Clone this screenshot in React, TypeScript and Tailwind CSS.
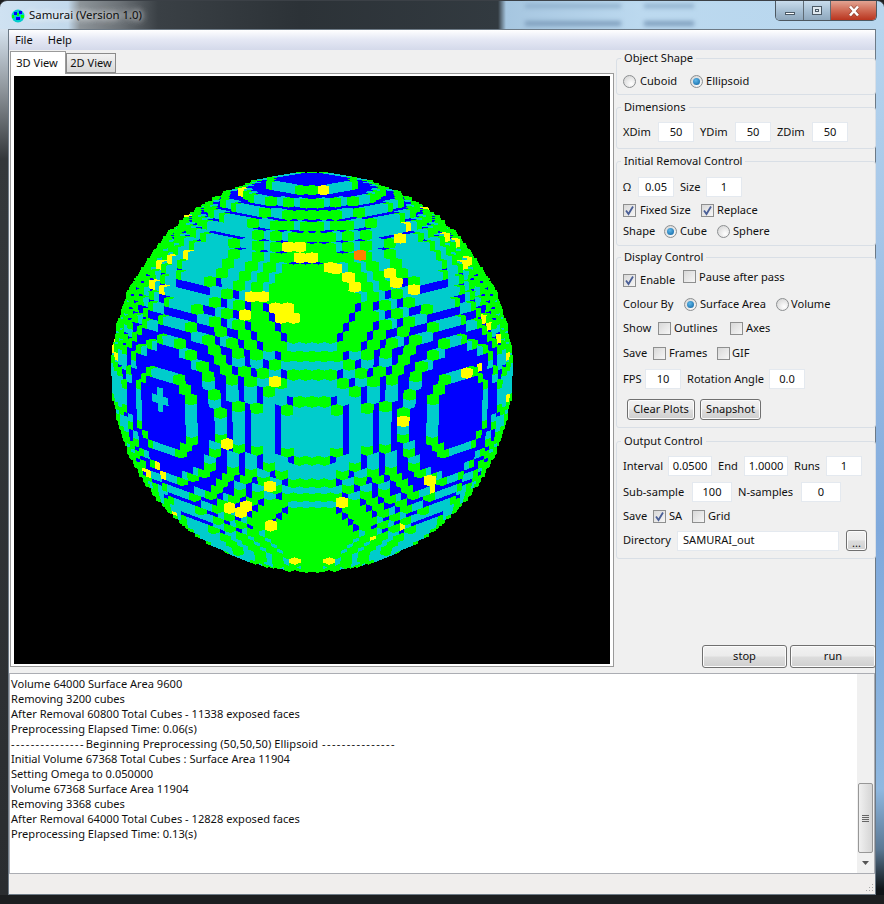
import { useMemo, type ReactNode } from 'react';

// voxel sphere, same as the app's GL view: colour by exposed faces
const R2 = 627;
const OFF = 0.5; // 50 cubes across, so the centre falls on a cube corner
const AX = [-0.707, 0.194, 0.68];
const AY = [0.707, 0.194, 0.68];
const AZ = [0, -0.962, 0.274];
const CX = 312;
const CY = 371;
const CAM = 225;
const FOCAL = 1750;

const YELLOW: [number, number][] = [
  [243, 188], [203, 202], [192, 215], [283, 242], [292, 242], [300, 242], [302, 253], [308, 253],
  [160, 265], [168, 260], [186, 255], [153, 282], [163, 290], [132, 282], [115, 340], [114, 350],
  [118, 358], [255, 300], [250, 310], [267, 292], [273, 302], [279, 312], [291, 303], [297, 313],
  [323, 192], [422, 207], [410, 230], [402, 233], [448, 233], [453, 237], [332, 263], [338, 273],
  [349, 273], [355, 282], [389, 268], [396, 277], [418, 293], [468, 257], [465, 262], [485, 317],
  [490, 323], [500, 335], [506, 357], [470, 370], [477, 365], [273, 384], [227, 444], [159, 463],
  [163, 472], [145, 468], [148, 473], [268, 485], [228, 507], [240, 513], [245, 509], [268, 525],
  [173, 512], [290, 560], [509, 397], [403, 420], [435, 480], [434, 491], [343, 506], [405, 526],
  [371, 539], [331, 560],
];
const CROSS: [number, number][] = [[160, 398], [154, 397], [166, 399], [160, 390], [160, 406]];
const ORANGE: [number, number] = [360, 251];

const inside = (x: number, y: number, z: number) =>
  (x - OFF) * (x - OFF) + (y - OFF) * (y - OFF) + (z - OFF) * (z - OFF) <= R2;
const dot = (a: number[], x: number, y: number, z: number) => a[0] * x + a[1] * y + a[2] * z;

function castRay(sx: number, sy: number): [number, number, number] | null {
  const dvx = sx - CX;
  const dvy = sy - CY;
  const dvz = -FOCAL;
  const ox = dot(AX, 0, 0, CAM);
  const oy = dot(AY, 0, 0, CAM);
  const oz = dot(AZ, 0, 0, CAM);
  let dx = dot(AX, dvx, dvy, dvz);
  let dy = dot(AY, dvx, dvy, dvz);
  let dz = dot(AZ, dvx, dvy, dvz);
  const len = Math.hypot(dx, dy, dz);
  dx /= len;
  dy /= len;
  dz /= len;
  const b = ox * dx + oy * dy + oz * dz;
  const c = ox * ox + oy * oy + oz * oz - 29 * 29;
  const disc = b * b - c;
  if (disc < 0) return null;
  const t0 = -b - Math.sqrt(disc);
  const px = ox + dx * t0 + OFF;
  const py = oy + dy * t0 + OFF;
  const pz = oz + dz * t0 + OFF;
  let ix = Math.round(px);
  let iy = Math.round(py);
  let iz = Math.round(pz);
  const sgx = dx > 0 ? 1 : -1;
  const sgy = dy > 0 ? 1 : -1;
  const sgz = dz > 0 ? 1 : -1;
  const tdx = Math.abs(1 / dx);
  const tdy = Math.abs(1 / dy);
  const tdz = Math.abs(1 / dz);
  let tx = dx === 0 ? 1e9 : (ix + sgx * 0.5 - px) / dx;
  let ty = dy === 0 ? 1e9 : (iy + sgy * 0.5 - py) / dy;
  let tz = dz === 0 ? 1e9 : (iz + sgz * 0.5 - pz) / dz;
  for (let i = 0; i < 120; i++) {
    if (inside(ix, iy, iz)) return [ix, iy, iz];
    if (tx < ty && tx < tz) {
      ix += sgx;
      tx += tdx;
    } else if (ty < tz) {
      iy += sgy;
      ty += tdy;
    } else {
      iz += sgz;
      tz += tdz;
    }
  }
  return null;
}

// outline of a whole cube on screen, so marked cubes show as full hexagons
function cubeOutline([x, y, z]: [number, number, number]) {
  const pts: [number, number][] = [];
  for (const a of [-0.5, 0.5]) {
    for (const b of [-0.5, 0.5]) {
      for (const c of [-0.5, 0.5]) {
        const [qx, qy, qz] = [x + a - OFF, y + b - OFF, z + c - OFF];
        const vx = AX[0] * qx + AY[0] * qy + AZ[0] * qz;
        const vy = AX[1] * qx + AY[1] * qy + AZ[1] * qz;
        const vz = AX[2] * qx + AY[2] * qy + AZ[2] * qz;
        const k = FOCAL / (CAM - vz);
        pts.push([CX + vx * k, CY + vy * k]);
      }
    }
  }
  pts.sort((p, q) => p[0] - q[0] || p[1] - q[1]);
  const half = (list: [number, number][]) => {
    const out: [number, number][] = [];
    for (const p of list) {
      while (out.length > 1) {
        const [a, b] = [out[out.length - 2], out[out.length - 1]];
        if ((b[0] - a[0]) * (p[1] - a[1]) - (b[1] - a[1]) * (p[0] - a[0]) > 0) break;
        out.pop();
      }
      out.push(p);
    }
    out.pop();
    return out;
  };
  const hull = [...half(pts), ...half([...pts].reverse())];
  return hull.map((p) => `${p[0].toFixed(1)},${p[1].toFixed(1)}`).join(' ');
}

function buildSphere() {
  const paths: Record<string, string[]> = { b: [], c: [], g: [], y: [], o: [] };
  const marks = new Map<string, string>();
  const hexes: string[] = [];
  for (const [x, y] of CROSS) {
    const hit = castRay(x, y);
    if (hit) marks.set(hit.join(), 'c');
  }
  for (const [x, y] of YELLOW) {
    const hit = castRay(x, y);
    if (!hit) continue;
    marks.set(hit.join(), 'y');
    if (Math.hypot(x - CX, y - CY) < 165) hexes.push(cubeOutline(hit));
  }
  const oh = castRay(ORANGE[0], ORANGE[1]);
  if (oh) marks.set(oh.join(), 'o');
  const orange = oh ? cubeOutline(oh) : '';
  const cache = new Map<string, string>();
  const colourOf = (h: [number, number, number]) => {
    const key = h.join();
    const m = marks.get(key);
    if (m) return m;
    let col = cache.get(key);
    if (col) return col;
    const [x, y, z] = h;
    const n =
      (inside(x + 1, y, z) ? 0 : 1) + (inside(x - 1, y, z) ? 0 : 1) + (inside(x, y + 1, z) ? 0 : 1) +
      (inside(x, y - 1, z) ? 0 : 1) + (inside(x, y, z + 1) ? 0 : 1) + (inside(x, y, z - 1) ? 0 : 1);
    col = n <= 1 ? 'b' : n === 2 ? 'c' : 'g';
    cache.set(key, col);
    return col;
  };
  for (let y = 150; y < 592; y++) {
    let start = 0;
    let cur = '';
    for (let x = 90; x <= 534; x++) {
      const hit = x < 534 ? castRay(x + 0.5, y + 0.5) : null;
      const col = hit ? colourOf(hit) : '';
      if (col !== cur) {
        if (cur) paths[cur].push(`M${start} ${y}h${x - start}v1h${start - x}z`);
        start = x;
        cur = col;
      }
    }
  }
  return { paths, hexes, orange };
}

function Sphere() {
  const { paths, hexes, orange } = useMemo(buildSphere, []);
  return (
    <svg width={596} height={588} viewBox="14 75 596 588" className="block" shapeRendering="crispEdges">
      <path d={paths.b.join('')} fill="#0000ff" />
      <path d={paths.c.join('')} fill="#00cccc" />
      <path d={paths.g.join('')} fill="#00ff00" />
      <path d={paths.y.join('')} fill="#ffff00" />
      {hexes.map((pts) => (
        <polygon key={pts} points={pts} fill="#ffff00" />
      ))}
      <path d={paths.o.join('')} fill="#ff7f00" />
      {orange && <polygon points={orange} fill="#ff7f00" />}
    </svg>
  );
}

function Radio({ on }: { on?: boolean }) {
  return (
    <span className="w-[13px] h-[13px] shrink-0 rounded-full border border-[#8c8f91] bg-[radial-gradient(circle_at_65%_70%,#ffffff,#cfcfcf)] flex items-center justify-center">
      {on && <span className="w-[7px] h-[7px] rounded-full bg-[radial-gradient(circle_at_40%_35%,#5fb8ea,#0b5f9e)]" />}
    </span>
  );
}

function Check({ on }: { on?: boolean }) {
  return (
    <span className="w-[13px] h-[13px] shrink-0 border border-[#8e8f8f] bg-[linear-gradient(135deg,#d8d8d8,#f6f6f6)] flex items-center justify-center">
      {on && (
        <svg width="11" height="11" viewBox="0 0 11 11">
          <path d="M2 5.5 L4.5 9 L9 1.5" fill="none" stroke="#4a5f97" strokeWidth="1.8" />
        </svg>
      )}
    </span>
  );
}

function Field({ value, className }: { value: string; className: string }) {
  return (
    <span className={`h-[20px] shrink-0 bg-white border border-[#e4e9ef] flex items-center justify-center ${className}`}>
      {value}
    </span>
  );
}

function Group({ title, className, children }: { title: string; className: string; children: ReactNode }) {
  return (
    <div className={`border border-[#d9dfe6] rounded-[3px] ${className}`}>
      <div className="-mt-[9px] ml-[4px] px-[3px] w-fit h-[16px] leading-[16px] bg-[#f0f0f0]">{title}</div>
      {children}
    </div>
  );
}

function PushButton({ children, className }: { children: ReactNode; className: string }) {
  return (
    <span className={`flex items-center justify-center border border-[#707070] rounded-[3px] bg-[linear-gradient(#f2f2f2_0%,#ebebeb_48%,#dddddd_52%,#cfcfcf_100%)] shadow-[inset_0_0_0_1px_#fcfcfc] ${className}`}>
      {children}
    </span>
  );
}

const LOG_TOP = [
  'Volume 64000 Surface Area 9600',
  'Removing 3200 cubes',
  'After Removal 60800 Total Cubes - 11338 exposed faces',
  'Preprocessing Elapsed Time: 0.06(s)',
];
const LOG_BOTTOM = [
  'Initial Volume 67368 Total Cubes : Surface Area 11904',
  'Setting Omega to 0.050000',
  'Volume 67368 Surface Area 11904',
  'Removing 3368 cubes',
  'After Removal 64000 Total Cubes - 12828 exposed faces',
  'Preprocessing Elapsed Time: 0.13(s)',
];

export default function App() {
  return (
    <div className="w-[884px] h-[904px] overflow-hidden flex flex-col text-[11.1px] whitespace-nowrap text-[#101010] font-['Noto_Sans',sans-serif] bg-[#1c1e20]">
      {/* title bar */}
      <div className="relative h-[29px] shrink-0 flex items-start border-t border-[#3b4046] rounded-t-[7px] bg-[linear-gradient(90deg,#cfe2f2_0px,#c3d9ec_68px,#8d9499_80px,#6c7277_120px,#3a4045_158px,#2c3237_300px,#323a40_498px,#a6c6e0_506px,#bcd9ef_640px,#b7d6ee_884px)]">
        <span className="absolute left-[525px] top-[3px] w-[96px] h-[4px] bg-[#8eaecb] blur-[2px]" />
        <span className="absolute left-[644px] top-[3px] w-[50px] h-[4px] bg-[#8eaecb] blur-[2px]" />
        <span className="absolute left-[525px] top-[20px] w-[96px] h-[5px] bg-[#7f9fbd] blur-[2px]" />
        <span className="absolute left-[644px] top-[20px] w-[50px] h-[5px] bg-[#7f9fbd] blur-[2px]" />
        <svg width="14" height="14" viewBox="0 0 14 14" className="ml-[11px] mt-[8px] shrink-0">
          <circle cx="7" cy="7" r="6.5" fill="#00cccc" />
          <path d="M3 3h3v3H3zM8 2h3v3H8zM5 8h4v3H5z" fill="#0000ff" />
          <path d="M1 6h2v3H1zM6 4h2v3H6zM10 6h3v3h-3z" fill="#00ff00" />
        </svg>
        <span className="ml-[4px] mt-[5px] text-[#0c0c0c] text-[11.4px] [text-shadow:0_0_7px_#ffffff,0_0_7px_#ffffff]">Samurai (Version 1.0)</span>
        <div className="ml-auto mr-[7px] w-[102px] h-[20px] flex rounded-b-[5px] border border-t-0 border-[#4d5861] overflow-hidden">
          <span className="w-[28px] border-r border-[#5f6b75] bg-[linear-gradient(#c9dcec,#a8c0d4_50%,#8fa8bd)] flex items-center justify-center">
            <span className="mt-[6px] w-[10px] h-[3px] bg-white border border-[#4c5a66]" />
          </span>
          <span className="w-[27px] border-r border-[#5f6b75] bg-[linear-gradient(#c9dcec,#a8c0d4_50%,#8fa8bd)] flex items-center justify-center">
            <span className="w-[10px] h-[9px] bg-[#dfe8ef] border border-[#4c5a66] flex items-center justify-center">
              <span className="w-[4px] h-[3px] border border-[#4c5a66]" />
            </span>
          </span>
          <span className="flex-1 bg-[linear-gradient(#e2a493,#cf6a54_50%,#b9351f)] flex items-center justify-center">
            <svg width="14" height="12" viewBox="0 0 14 12">
              <path d="M3 1.5 L11 10.5 M11 1.5 L3 10.5" stroke="#5a2a20" strokeWidth="4" opacity="0.5" />
              <path d="M3 1.5 L11 10.5 M11 1.5 L3 10.5" stroke="#ffffff" strokeWidth="2.6" />
            </svg>
          </span>
        </div>
      </div>

      <div className="h-[866px] shrink-0 flex">
        <div className="w-[8px] shrink-0 bg-[linear-gradient(#d5e2ee_0px,#8f969c_60px,#34383b_130px,#2a2d30_100%)]" />

        <div className="w-[868px] shrink-0 border border-[#6d7a86] bg-[#f0f0f0] flex flex-col">
          {/* menu */}
          <div className="h-[20px] shrink-0 flex items-center gap-[15px] pl-[6px] bg-[linear-gradient(#ffffff,#e6e9f5_45%,#d4d9ea)]">
            <span>File</span>
            <span>Help</span>
          </div>

          <div className="h-[621px] shrink-0 flex">
            {/* tabs + GL view */}
            <div className="w-[604px] shrink-0 flex flex-col ml-[1px] pt-[1px]">
              <div className="h-[22px] shrink-0 flex items-end relative z-10">
                <span className="w-[56px] h-[23px] -mb-[1px] pr-[2px] bg-white border border-b-0 border-[#9a9a9a] flex items-center justify-center">3D View</span>
                <span className="w-[50px] h-[20px] bg-[linear-gradient(#f2f2f2,#d8d8d8)] border border-[#8a8a8a] flex items-center justify-center">2D View</span>
              </div>
              <div className="h-[594px] border border-[#9a9a9a] bg-white pl-[3px] pt-[2px]">
                <div className="w-[596px] h-[588px] bg-black">
                  <Sphere />
                </div>
              </div>
            </div>

            {/* control column */}
            <div className="w-[260px] shrink-0 ml-[2px] flex flex-col pt-[8px]">
              <Group title="Object Shape" className="h-[37px]">
                <div className="flex items-center h-[20px] mt-[5px] pl-[6px]">
                  <Radio /><span className="ml-[4px] w-[50px]">Cuboid</span>
                  <Radio on /><span className="ml-[3px]">Ellipsoid</span>
                </div>
              </Group>
              <Group title="Dimensions" className="h-[42px] mt-[12px]">
                <div className="flex items-center mt-[7px] pl-[6px]">
                  <span className="w-[35px]">XDim</span><Field value="50" className="w-[36px]" />
                  <span className="w-[41px] pl-[6px]">YDim</span><Field value="50" className="w-[36px]" />
                  <span className="w-[41px] pl-[6px]">ZDim</span><Field value="50" className="w-[36px]" />
                </div>
              </Group>
              <Group title="Initial Removal Control" className="h-[85px] mt-[12px]">
                <div className="flex items-center mt-[8px] pl-[6px]">
                  <span className="w-[15px]">Ω</span><Field value="0.05" className="w-[36px]" />
                  <span className="w-[32px] pl-[6px]">Size</span><Field value="1" className="w-[36px]" />
                </div>
                <div className="flex items-center h-[16px] mt-[5px] pl-[6px]">
                  <Check on /><span className="ml-[4px] w-[61px]">Fixed Size</span>
                  <Check on /><span className="ml-[3px]">Replace</span>
                </div>
                <div className="flex items-center h-[16px] mt-[5px] pl-[6px]">
                  <span className="w-[41px]">Shape</span>
                  <Radio on /><span className="ml-[3px] w-[37px]">Cube</span>
                  <Radio /><span className="ml-[3px]">Sphere</span>
                </div>
              </Group>
              <Group title="Display Control" className="h-[171px] mt-[11px]">
                <div className="flex items-center h-[18px] mt-[6px] pl-[6px]">
                  <Check on /><span className="ml-[4px] w-[43px]">Enable</span>
                  <span className="-mt-[6px] flex items-center"><Check /><span className="ml-[3px]">Pause after pass</span></span>
                </div>
                <div className="flex items-center h-[18px] mt-[6px] pl-[6px]">
                  <span className="w-[61px]">Colour By</span>
                  <Radio on /><span className="ml-[3px] w-[76px]">Surface Area</span>
                  <Radio /><span className="ml-[2px]">Volume</span>
                </div>
                <div className="flex items-center h-[18px] mt-[6px] pl-[6px]">
                  <span className="w-[35px]">Show</span>
                  <Check /><span className="ml-[3px] w-[56px]">Outlines</span>
                  <Check /><span className="ml-[3px]">Axes</span>
                </div>
                <div className="flex items-center h-[18px] mt-[7px] pl-[6px]">
                  <span className="w-[30px]">Save</span>
                  <Check /><span className="ml-[3px] w-[48px]">Frames</span>
                  <Check /><span className="ml-[2px]">GIF</span>
                </div>
                <div className="flex items-center mt-[7px] pl-[6px]">
                  <span className="w-[22px]">FPS</span><Field value="10" className="w-[36px]" />
                  <span className="w-[88px] pl-[6px]">Rotation Angle</span><Field value="0.0" className="w-[36px]" />
                </div>
                <div className="flex items-center gap-[5px] mt-[10px] pl-[10px]">
                  <PushButton className="w-[68px] h-[21px]">Clear Plots</PushButton>
                  <PushButton className="w-[61px] h-[21px]">Snapshot</PushButton>
                </div>
              </Group>
              <Group title="Output Control" className="h-[118px] mt-[13px]">
                <div className="flex items-center mt-[7px] pl-[6px]">
                  <span className="w-[45px]">Interval</span><Field value="0.0500" className="w-[44px]" />
                  <span className="w-[32px] pl-[6px]">End</span><Field value="1.0000" className="w-[44px]" />
                  <span className="w-[38px] pl-[6px]">Runs</span><Field value="1" className="w-[36px]" />
                </div>
                <div className="flex items-center mt-[6px] pl-[6px]">
                  <span className="w-[69px]">Sub-sample</span><Field value="100" className="w-[40px]" />
                  <span className="w-[69px] pl-[6px]">N-samples</span><Field value="0" className="w-[40px]" />
                </div>
                <div className="flex items-center h-[18px] mt-[5px] pl-[6px]">
                  <span className="w-[30px]">Save</span>
                  <Check on /><span className="ml-[3px] w-[23px]">SA</span>
                  <Check /><span className="ml-[3px]">Grid</span>
                </div>
                <div className="flex items-center mt-[5px] pl-[6px]">
                  <span className="w-[54px]">Directory</span>
                  <Field value="SAMURAI_out" className="w-[162px] !justify-start pl-[5px]" />
                  <PushButton className="ml-[7px] w-[21px] h-[21px] items-end leading-[14px]">...</PushButton>
                </div>
              </Group>
              <div className="mt-auto flex justify-end gap-[3px] mb-[3px]">
                <PushButton className="w-[85px] h-[23px]">stop</PushButton>
                <PushButton className="w-[86px] h-[23px]">run</PushButton>
              </div>
            </div>
          </div>

          {/* log output */}
          <div className="h-[201px] mt-[2px] shrink-0 border border-[#abadb3] bg-white flex">
            <div className="flex-1 pl-[1px] pt-[2px]">
              {LOG_TOP.map((line) => (
                <div key={line} className="h-[15px] leading-[15px]">{line}</div>
              ))}
              <div className="h-[15px] leading-[15px] flex">
                <span className="tracking-[1.35px]">---------------</span>
                <span className="ml-[1px] tracking-[0.05px]">Beginning Preprocessing (50,50,50) Ellipsoid</span>
                <span className="ml-[4px] tracking-[1.35px]">---------------</span>
              </div>
              {LOG_BOTTOM.map((line) => (
                <div key={line} className="h-[15px] leading-[15px]">{line}</div>
              ))}
            </div>
            <div className="w-[17px] shrink-0 bg-[#f0f0f0] flex flex-col items-center justify-end pb-[1px]">
              <div className="w-[15px] h-[70px] rounded-[2px] border border-[#979797] bg-[linear-gradient(90deg,#f0f0f0,#d5d5d5)] flex flex-col items-center justify-center gap-[1px]">
                <span className="w-[7px] h-px bg-[#666666]" />
                <span className="w-[7px] h-px bg-[#666666]" />
                <span className="w-[7px] h-px bg-[#666666]" />
                <span className="w-[7px] h-px bg-[#666666]" />
              </div>
              <svg width="9" height="19" viewBox="0 0 9 19" className="shrink-0">
                <path d="M1 8h7l-3.5 4z" fill="#555555" />
              </svg>
            </div>
          </div>

          {/* status bar */}
          <div className="flex-1 bg-[#f0eeed] flex justify-end items-end">
            <svg width="10" height="10" viewBox="0 0 10 10" className="mr-[1px] mb-[1px]">
              <path d="M8 1h1v1H8zM5 4h1v1H5zM8 4h1v1H8zM2 7h1v1H2zM5 7h1v1H5zM8 7h1v1H8z" fill="#a8a8a8" />
            </svg>
          </div>
        </div>

        <div className="w-[8px] shrink-0 bg-[linear-gradient(#b6d5ee_0px,#a5c6e8_200px,#7fa9dc_500px,#8fb8e0_760px,#5b7894_820px,#0f1418_860px)]" />
      </div>
      <div className="h-[9px] shrink-0" />
    </div>
  );
}
